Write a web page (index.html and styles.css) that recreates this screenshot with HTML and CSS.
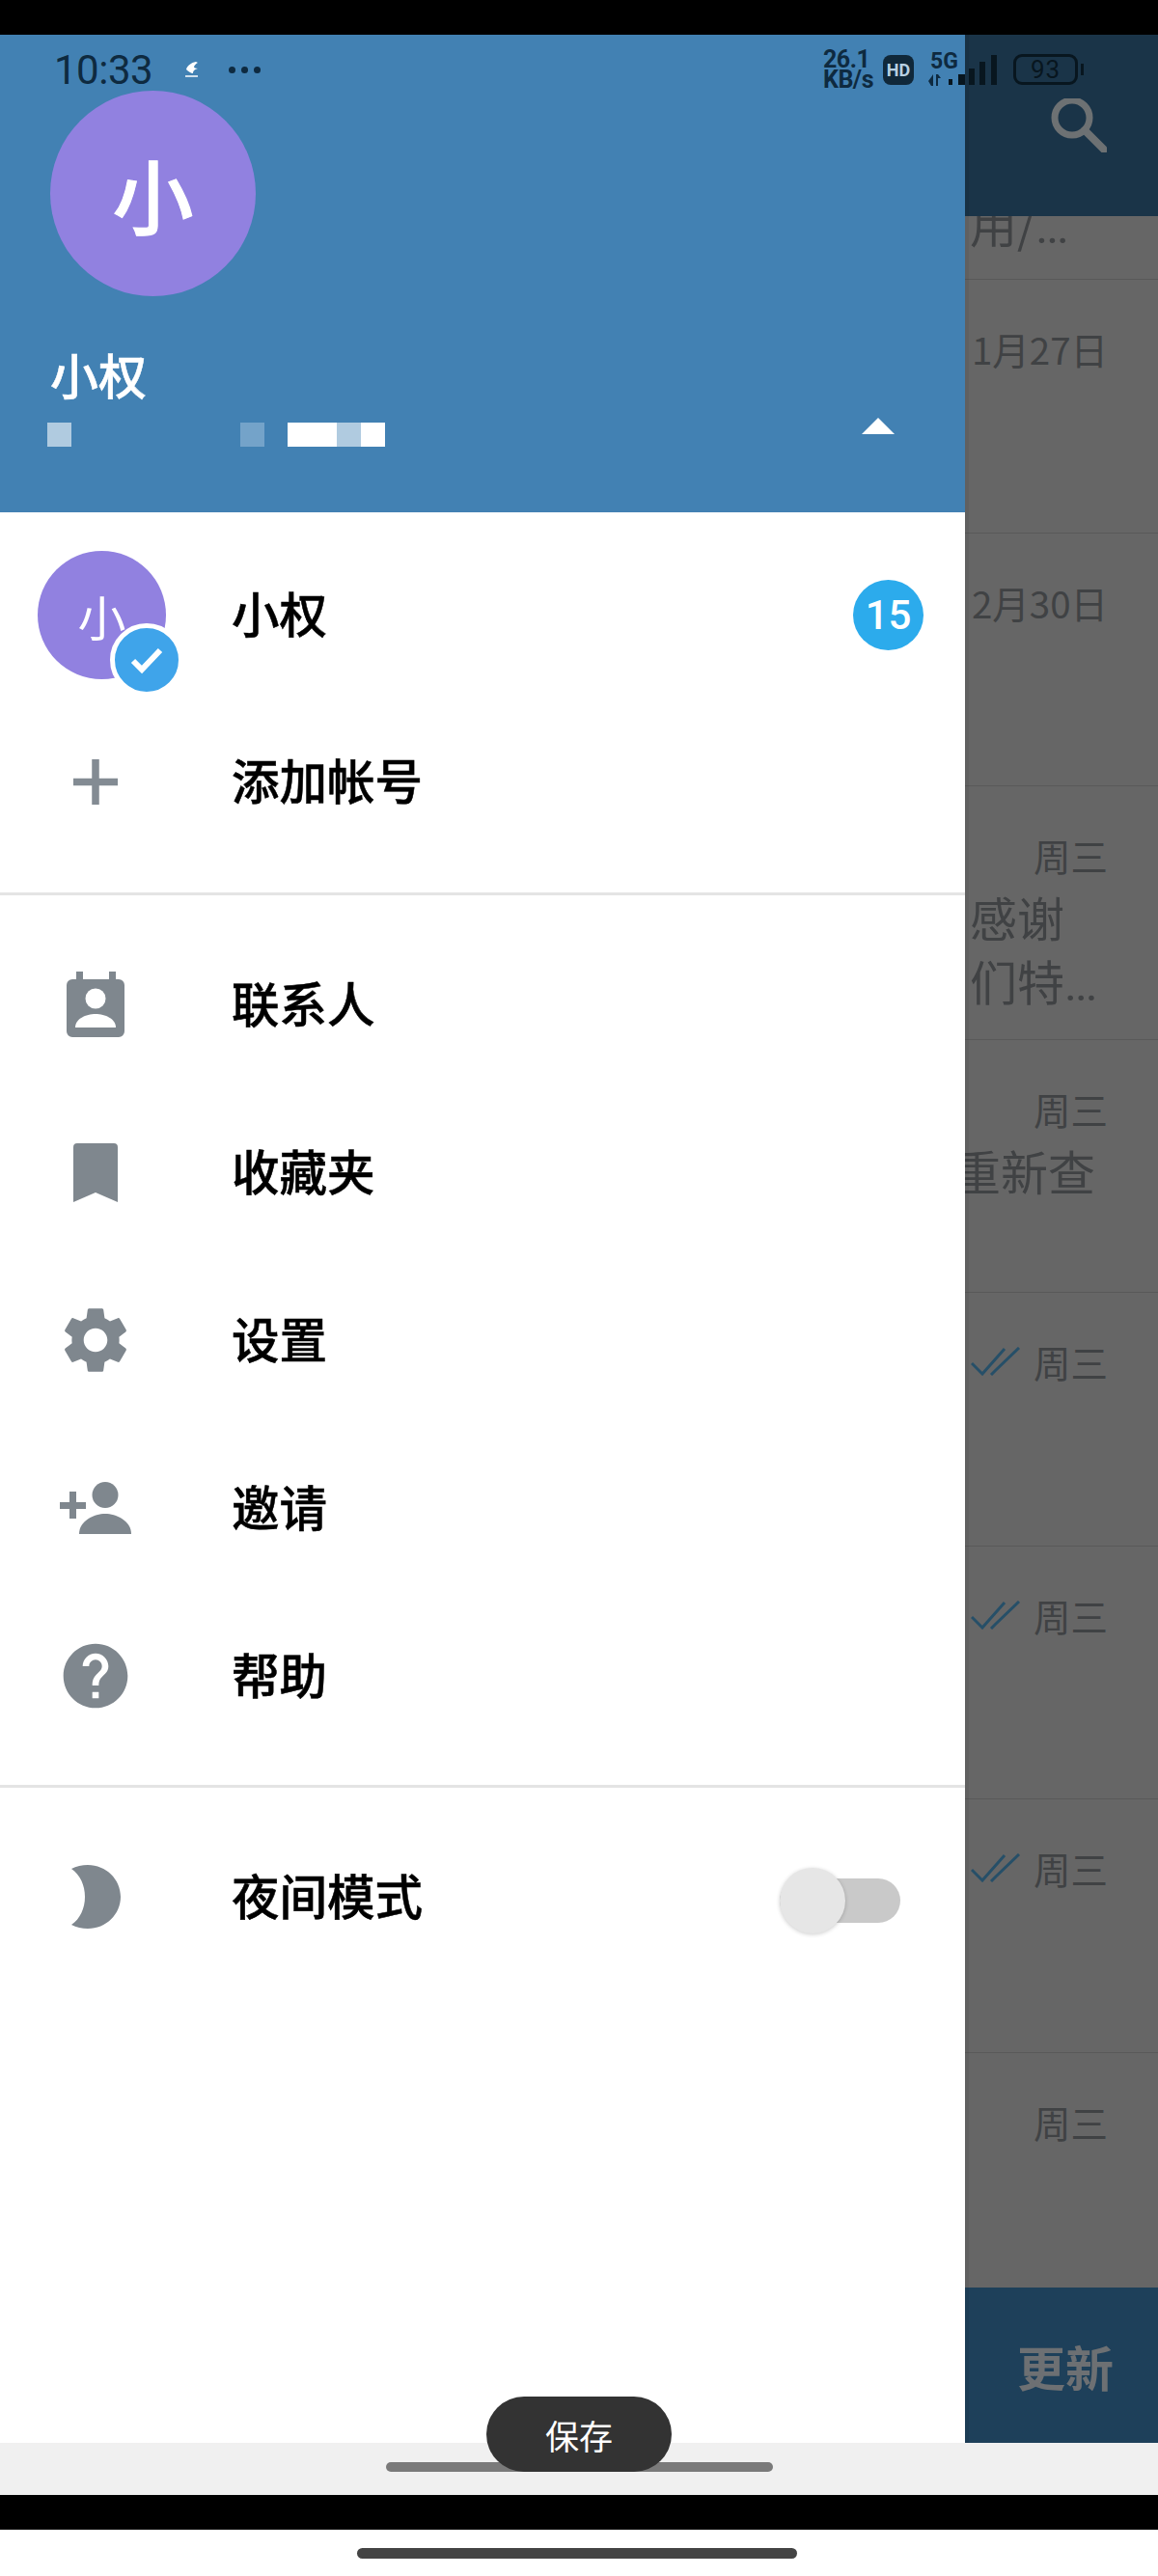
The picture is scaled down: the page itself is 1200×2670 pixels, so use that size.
FILE: index.html
```html
<!DOCTYPE html>
<html lang="zh-CN">
<head>
    <meta charset="UTF-8">
    <meta name="viewport" content="width=device-width, initial-scale=1.0">
    <title>小权</title>
    <link rel="stylesheet" href="styles.css">
</head>
<body>
    <div class="black-bar"></div>

    <div class="app">
        <!-- chat list, dimmed behind the drawer -->
        <div class="chats">
            <div class="chats-top">
                <svg class="search-icon" viewBox="0 0 58 56" width="58" height="56">
                    <circle cx="22" cy="20" r="18" fill="none" stroke="#6d7173" stroke-width="7"/>
                    <path d="M35 33 L55 53" stroke="#6d7173" stroke-width="8" stroke-linecap="round"/>
                </svg>
            </div>
            <div class="chat-rows">
                <div class="chat-row chat-row-first">用/<span class="dots">...</span></div>
                <div class="chat-row">
                    <div class="chat-time">1月27日</div>
                </div>
                <div class="chat-row">
                    <div class="chat-time">2月30日</div>
                </div>
                <div class="chat-row">
                    <div class="chat-time">周三</div>
                    <div class="chat-msg">感谢</div>
                    <div class="chat-msg">们特<span class="dots">...</span></div>
                </div>
                <div class="chat-row">
                    <div class="chat-time">周三</div>
                    <div class="chat-msg chat-msg-cut">重新查</div>
                </div>
                <div class="chat-row">
                    <div class="chat-time">
                        <svg class="read-check" viewBox="0 0 52 30" width="52" height="30"><path d="M1 17 L12 28 L35 2 M21 29 L26 24 L50 1" fill="none" stroke="#264f68" stroke-width="3"/></svg>
                        周三
                    </div>
                </div>
                <div class="chat-row">
                    <div class="chat-time">
                        <svg class="read-check" viewBox="0 0 52 30" width="52" height="30"><path d="M1 17 L12 28 L35 2 M21 29 L26 24 L50 1" fill="none" stroke="#264f68" stroke-width="3"/></svg>
                        周三
                    </div>
                </div>
                <div class="chat-row">
                    <div class="chat-time">
                        <svg class="read-check" viewBox="0 0 52 30" width="52" height="30"><path d="M1 17 L12 28 L35 2 M21 29 L26 24 L50 1" fill="none" stroke="#264f68" stroke-width="3"/></svg>
                        周三
                    </div>
                </div>
                <div class="chat-row">
                    <div class="chat-time">周三</div>
                </div>
            </div>
            <div class="update-bar">更新</div>
        </div>

        <!-- drawer -->
        <div class="drawer">
            <div class="drawer-header">
                <div class="big-avatar">小</div>
                <div class="header-name">小权</div>
                <div class="header-sub">
                    <span class="px px-light"></span>
                    <span class="px px-mid px-gap-wide"></span>
                    <span class="px px-white px-wide px-gap"></span>
                    <span class="px px-light"></span>
                    <span class="px px-white"></span>
                    <span class="header-arrow"></span>
                </div>
            </div>

            <div class="menu-section">
                <div class="menu-row">
                    <div class="icon-slot icon-slot-left">
                        <div class="small-avatar">小
                            <div class="check-badge">
                                <svg viewBox="0 0 36 30" width="36" height="30"><path d="M4 16 L13 25 L32 5" fill="none" stroke="#fff" stroke-width="6"/></svg>
                            </div>
                        </div>
                    </div>
                    <div class="menu-text">小权</div>
                    <div class="count-badge">15</div>
                </div>
                <div class="menu-row">
                    <div class="icon-slot">
                        <svg viewBox="0 0 46 47" width="46" height="47"><path d="M0 23.5 H46 M23 0 V47" stroke="#838b93" stroke-width="7.5"/></svg>
                    </div>
                    <div class="menu-text">添加帐号</div>
                </div>
            </div>

            <div class="menu-section">
                <div class="menu-row">
                    <div class="icon-slot">
                        <svg viewBox="0 0 60 68" width="60" height="68">
                            <path d="M10 0 H17 V8 H44 V0 H51 V8 H54 a6 6 0 0 1 6 6 V62 a6 6 0 0 1 -6 6 H6 a6 6 0 0 1 -6 -6 V14 a6 6 0 0 1 6 -6 H10 Z" fill="#7f878e"/>
                            <circle cx="30" cy="28" r="10.5" fill="#fff"/>
                            <path d="M9 58 C9 49 20 44 30 44 S51 49 51 58 Z" fill="#fff"/>
                        </svg>
                    </div>
                    <div class="menu-text">联系人</div>
                </div>
                <div class="menu-row">
                    <div class="icon-slot">
                        <svg viewBox="0 0 46 61" width="46" height="61"><path d="M4 0 H42 a4 4 0 0 1 4 4 V61 L23 51 L0 61 V4 a4 4 0 0 1 4 -4 Z" fill="#7f878e"/></svg>
                    </div>
                    <div class="menu-text">收藏夹</div>
                </div>
                <div class="menu-row">
                    <div class="icon-slot">
                        <svg viewBox="0 0 24 24" width="82" height="82"><path fill="#7f878e" d="M19.14 12.94c.04-.3.06-.61.06-.94 0-.32-.02-.64-.07-.94l2.03-1.58c.18-.14.23-.41.12-.61l-1.92-3.32c-.12-.22-.37-.29-.59-.22l-2.39.96c-.5-.38-1.03-.7-1.62-.94l-.36-2.54c-.04-.24-.24-.41-.48-.41h-3.84c-.24 0-.43.17-.47.41l-.36 2.54c-.59.24-1.13.57-1.62.94l-2.39-.96c-.22-.08-.47 0-.59.22L2.74 8.87c-.12.21-.08.47.12.61l2.03 1.58c-.05.3-.09.63-.09.94s.02.64.07.94l-2.03 1.58c-.18.14-.23.41-.12.61l1.92 3.32c.12.22.37.29.59.22l2.39-.96c.5.38 1.03.7 1.62.94l.36 2.54c.05.24.24.41.48.41h3.84c.24 0 .44-.17.47-.41l.36-2.54c.59-.24 1.13-.56 1.62-.94l2.39.96c.22.08.47 0 .59-.22l1.92-3.32c.12-.22.07-.47-.12-.61l-2.01-1.58zM12 15.6c-1.98 0-3.6-1.62-3.6-3.6s1.62-3.6 3.6-3.6 3.6 1.62 3.6 3.6-1.62 3.6-3.6 3.6z"/></svg>
                    </div>
                    <div class="menu-text">设置</div>
                </div>
                <div class="menu-row">
                    <div class="icon-slot">
                        <svg viewBox="0 0 74 54" width="74" height="54">
                            <circle cx="47" cy="13.5" r="13.5" fill="#7f878e"/>
                            <path d="M20 54 C20 40 36 33 47 33 S74 40 74 54 Z" fill="#7f878e"/>
                            <path d="M0 24.5 H27 M13.5 10 V38" stroke="#7f878e" stroke-width="7"/>
                        </svg>
                    </div>
                    <div class="menu-text">邀请</div>
                </div>
                <div class="menu-row">
                    <div class="icon-slot">
                        <svg viewBox="0 0 24 24" width="80" height="80"><path fill="#7f878e" d="M12 2C6.48 2 2 6.48 2 12s4.48 10 10 10 10-4.48 10-10S17.52 2 12 2zm1 17h-2v-2h2v2zm2.07-7.75l-.9.92C13.45 12.9 13 13.5 13 15h-2v-.5c0-1.1.45-2.1 1.17-2.83l1.24-1.26c.37-.36.59-.86.59-1.41 0-1.1-.9-2-2-2s-2 .9-2 2H8c0-2.21 1.79-4 4-4s4 1.79 4 4c0 .88-.36 1.68-.93 2.25z"/></svg>
                    </div>
                    <div class="menu-text">帮助</div>
                </div>
            </div>

            <div class="menu-section menu-section-last">
                <div class="menu-row">
                    <div class="icon-slot">
                        <svg viewBox="0 0 51 66" width="51" height="66"><path d="M0 4 C5 1.500 11 0 17 0 C36 0 51 15 51 33 S36 66 17 66 C11 66 5 64.500 0 62 C9 56 14 45 14 33 S9 10 0 4 Z" fill="#7f878e"/></svg>
                    </div>
                    <div class="menu-text">夜间模式</div>
                    <div class="toggle"><div class="toggle-knob"></div></div>
                </div>
            </div>
        </div>

        <!-- status bar lies over both drawer and chats -->
        <div class="status-bar">
            <div class="status-left">
                <span class="status-time">10:33</span>
                <svg class="status-note" viewBox="0 0 14 16" width="14" height="16">
                    <path d="M11 0 C6 1 2 4 1 8 C3 10 6 12 8 12 C8 10 9 8 13 7 C10 7 9 6 9 5 C10 3 11 2 13 1 Z" fill="#fff"/>
                    <path d="M0 15 H13" stroke="#fff" stroke-width="1.500"/>
                </svg>
                <span class="status-dots"><i></i><i></i><i></i></span>
            </div>
            <div class="status-right">
                <div class="speed">26.1<br>KB/s</div>
                <div class="hd-box">HD</div>
                <div class="net">
                    <span class="net-label">5G</span>
                    <svg viewBox="0 0 21 12" width="21" height="12">
                        <path d="M5 0 V12 H3 L0 7 L3 3 Z M8 0 H10 L13 4 L10 4 V12 H8 Z" fill="#0e2a40"/>
                    </svg>
                </div>
                <svg class="signal" viewBox="0 0 50 31" width="50" height="31">
                    <path d="M0 25 h4 v6 h-4 Z M10 20 h7 v11 h-7 Z M21 14 h6 v17 h-6 Z M32 7 h6 v24 h-6 Z M44 0 h6 v31 h-6 Z" fill="#08161f"/>
                </svg>
                <div class="battery"><span>93</span></div>
                <div class="battery-nub"></div>
            </div>
        </div>
    </div>

    <div class="nav-strip"><div class="nav-handle"></div></div>
    <div class="black-bar"></div>
    <div class="home-strip"><div class="home-handle"></div></div>

    <div class="toast">保存</div>
</body>
</html>
```

FILE: styles.css
```css
* {
    box-sizing: border-box;
}
body {
    margin: 0;
    width: 1200px;
    height: 2670px;
    position: relative;
    overflow: hidden;
    display: flex;
    flex-direction: column;
    background-color: #fff;
    color: #000;
    font-family: Roboto, "Noto Sans CJK SC", sans-serif;
}
.black-bar {
    height: 36px;
    flex: none;
    background-color: #000;
}
.app {
    height: 2496px;
    flex: none;
    position: relative;
    overflow: hidden;
}

/* chats behind the drawer */
.chats {
    height: 100%;
    display: flex;
    flex-direction: column;
    background-color: #666;
}
.chats-top {
    height: 188px;
    flex: none;
    position: relative;
    z-index: 1;
    display: flex;
    justify-content: flex-end;
    padding: 66px 53px 0 0;
    background-color: #1a3448;
}
.chat-rows {
    flex: 1;
    overflow: hidden;
    font-family: "Noto Sans CJK SC", sans-serif;
    color: #404244;
}
.chat-row {
    height: 262.5px;
    padding-top: 49px;
    border-bottom: 1px solid #595959;
}
.chat-row-first {
    height: 66px;
    padding: 0 0 0 1005px;
    font-size: 49px;
    line-height: 14px;
}
.chat-time {
    height: 44px;
    padding-right: 52px;
    display: flex;
    justify-content: flex-end;
    align-items: center;
    font-size: 38.5px;
}
.read-check {
    margin-right: 13px;
}
.chat-msg {
    margin-top: 15px;
    height: 54px;
    padding-left: 1005px;
    font-size: 49px;
    line-height: 54px;
    white-space: nowrap;
}
.chat-msg + .chat-msg {
    margin-top: 12px;
}
.chat-msg-cut {
    padding-left: 988px;
}
.dots {
    font-family: Roboto, sans-serif;
    letter-spacing: -2px;
}
.update-bar {
    height: 161px;
    flex: none;
    display: flex;
    justify-content: flex-end;
    align-items: center;
    padding-right: 46px;
    background-color: #1e405a;
    color: #6d7073;
    font-family: "Noto Sans CJK SC", sans-serif;
    font-size: 50px;
    font-weight: 700;
}

/* drawer */
.drawer {
    position: absolute;
    top: 0;
    left: 0;
    bottom: 0;
    width: 1000px;
    z-index: 2;
    background-color: #fff;
    box-shadow: 4px 0 0 rgba(0, 0, 0, 0.05);
    font-family: "Noto Sans CJK SC", sans-serif;
}
.drawer-header {
    height: 495px;
    padding: 58px 0 0 52px;
    background-color: #4281b3;
    color: #fff;
}
.big-avatar {
    width: 213px;
    height: 213px;
    border-radius: 50%;
    display: flex;
    justify-content: center;
    align-items: center;
    background-color: #9181e0;
    font-size: 84px;
    font-weight: 500;
    -webkit-text-stroke: 1px #fff;
}
.header-name {
    margin-top: 50px;
    font-size: 50px;
    line-height: 60px;
    font-weight: 500;
    -webkit-text-stroke: 0.5px #fff;
}
.header-sub {
    margin: 21px 0 0 -3px;
    height: 25px;
    display: flex;
}
.px {
    width: 25px;
    height: 25px;
}
.px-light {
    background-color: #b0cbe0;
}
.px-mid {
    background-color: #74a3c9;
}
.px-white {
    background-color: #fff;
}
.px-wide {
    width: 51px;
}
.px-gap-wide {
    margin-left: 175px;
}
.px-gap {
    margin-left: 24px;
}
.header-arrow {
    margin: -5px 73px 0 auto;
    width: 0;
    height: 0;
    border-left: 17px solid transparent;
    border-right: 17px solid transparent;
    border-bottom: 17px solid #fff;
}
.menu-section {
    padding: 26px 0 26px;
    border-bottom: 3px solid #e4e4e4;
}
.menu-section:nth-child(2) {
    padding: 20px 0 28px;
}
.menu-section-last {
    border-bottom: 0;
}
.menu-row {
    height: 174px;
    display: flex;
    align-items: center;
}
.menu-section:nth-child(2) .menu-row {
    height: 173px;
}
.icon-slot {
    width: 198px;
    flex: none;
    margin-right: 42px;
    display: flex;
    justify-content: center;
    align-items: center;
}
.icon-slot-left {
    justify-content: flex-start;
    padding-left: 39px;
}
.menu-text {
    margin-bottom: 6px;
    font-size: 49.5px;
    font-weight: 500;
    -webkit-text-stroke: 0.5px #000;
    color: #000;
}
.small-avatar {
    width: 133px;
    height: 133px;
    position: relative;
    border-radius: 50%;
    display: flex;
    justify-content: center;
    align-items: center;
    background-color: #9181e0;
    color: #fff;
    font-size: 50px;
}
.check-badge {
    position: absolute;
    left: 75px;
    top: 75px;
    width: 76px;
    height: 76px;
    border: 5px solid #fff;
    border-radius: 50%;
    display: flex;
    justify-content: center;
    align-items: center;
    background-color: #3fa4ea;
}
.count-badge {
    margin: 0 43px 0 auto;
    width: 73px;
    height: 73px;
    border-radius: 50%;
    display: flex;
    justify-content: center;
    align-items: center;
    background-color: #2cabec;
    color: #fff;
    font-family: Roboto, sans-serif;
    font-size: 42px;
    font-weight: 500;
    -webkit-text-stroke: 0;
}
.toggle {
    margin: 8px 67px 0 auto;
    width: 125px;
    height: 46px;
    display: flex;
    align-items: center;
    border-radius: 23px;
    background-color: #c9c9c9;
}
.toggle-knob {
    width: 68px;
    height: 68px;
    border-radius: 50%;
    background-color: #e6e6e6;
    box-shadow: 0 1px 4px rgba(0, 0, 0, 0.2);
}

/* status bar */
.status-bar {
    position: absolute;
    top: 0;
    left: 0;
    right: 0;
    height: 72px;
    z-index: 3;
    display: flex;
    justify-content: space-between;
    align-items: center;
    padding: 0 77px 0 56px;
    color: #0e2a40;
}
.status-left {
    display: flex;
    align-items: center;
}
.status-time {
    font-size: 42px;
    letter-spacing: -0.5px;
}
.status-note {
    margin-left: 34px;
}
.status-dots {
    margin-left: 31px;
    display: flex;
    gap: 6px;
}
.status-dots i {
    width: 7px;
    height: 7px;
    border-radius: 50%;
    background-color: #0e2a40;
}
.status-right {
    display: flex;
    align-items: center;
}
.speed {
    width: 62px;
    font-size: 25px;
    line-height: 21px;
    font-weight: 700;
    letter-spacing: -0.5px;
}
.hd-box {
    width: 32px;
    height: 31px;
    display: flex;
    justify-content: center;
    align-items: center;
    border-radius: 8px;
    background-color: #10283a;
    color: #b7d0e2;
    font-size: 18px;
    font-weight: 700;
}
.net {
    margin-left: 15px;
    width: 21px;
    display: flex;
    flex-direction: column;
    gap: 4px;
}
.net-label {
    margin-left: 2px;
    font-size: 23px;
    line-height: 18px;
    font-weight: 700;
    white-space: nowrap;
}
.battery {
    margin-left: 17px;
    width: 67px;
    height: 32px;
    display: flex;
    justify-content: center;
    align-items: center;
    border: 3px solid #08161f;
    border-radius: 9px;
    color: #08161f;
    font-size: 26px;
    letter-spacing: 1px;
}
.battery-nub {
    margin-left: 3px;
    width: 3px;
    height: 12px;
    background-color: #08161f;
}

/* bottom strips */
.nav-strip {
    height: 54px;
    flex: none;
    padding-top: 20px;
    display: flex;
    justify-content: center;
    align-items: flex-start;
    background-color: #f0f0f0;
}
.nav-handle {
    width: 401px;
    height: 10px;
    border-radius: 5px;
    background-color: #7a7a7a;
}
.home-strip {
    height: 48px;
    flex: none;
    padding: 19px 4px 0 0;
    display: flex;
    justify-content: center;
    align-items: flex-start;
    background-color: #fff;
}
.home-handle {
    width: 456px;
    height: 11px;
    border-radius: 6px;
    background-color: #444;
}
.toast {
    position: absolute;
    left: 504px;
    bottom: 108px;
    width: 192px;
    height: 78px;
    z-index: 4;
    display: flex;
    justify-content: center;
    align-items: center;
    border-radius: 39px;
    background-color: #333;
    color: #fff;
    font-family: "Noto Sans CJK SC", sans-serif;
    font-size: 35px;
}
```
